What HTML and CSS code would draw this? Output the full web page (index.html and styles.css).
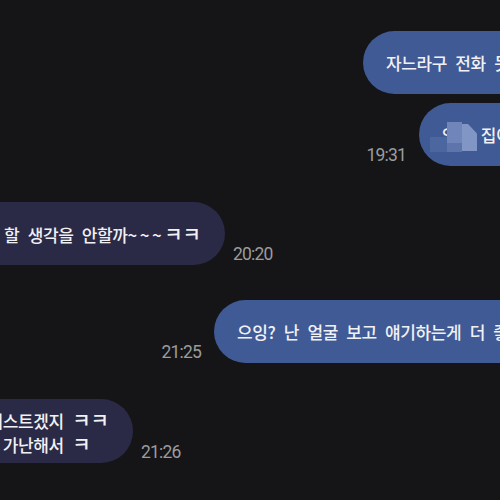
FILE: index.html
```html
<!DOCTYPE html>
<html lang="ko">
<head>
<meta charset="utf-8">
<title>대화</title>
<link rel="stylesheet" href="styles.css">
</head>
<body>
<div class="chat">
  <div class="row out first">
    <div class="bubble sent"><span class="txt">자느라구 전화 못 받았어 ㅠㅠ</span></div>
  </div>

  <div class="row out second">
    <span class="time">19:31</span>
    <div class="bubble sent masked">
      <span class="txt">엄마 집이라서 ㅎㅎ</span>
      <div class="mosaic" aria-hidden="true">
        <i class="m1"></i><i class="m2"></i><i class="m3"></i><i class="m4"></i>
      </div>
    </div>
  </div>

  <div class="row in third">
    <div class="bubble recv w225"><span class="txt">왜 전화 할 생각을 안할까<span class="tl">~~~</span><span class="k">ㅋㅋ</span></span></div>
    <span class="time">20:20</span>
  </div>

  <div class="row out fourth">
    <span class="time">21:25</span>
    <div class="bubble sent"><span class="txt">으잉? 난 얼굴 보고 얘기하는게 더 좋은데</span></div>
  </div>

  <div class="row in fifth">
    <div class="bubble recv two w133"><span class="txt">걍 블랙리스트겠지 <span class="k">ㅋㅋ</span><br>우리집이 가난해서 <span class="k">ㅋ</span></span></div>
    <span class="time">21:26</span>
  </div>
</div>
</body>
</html>
```

FILE: styles.css
```css
html, body {
  margin: 0;
  padding: 0;
  background: #151518;
}

.chat {
  width: 500px;
  height: 500px;
  overflow: hidden;
  padding-top: 31px;
  box-sizing: border-box;
  font-family: "Noto Sans CJK KR", "Noto Sans", sans-serif;
}

.row {
  display: flex;
  align-items: flex-end;
}

.second { margin-top: 9px; }
.third  { margin-top: 36px; }
.fourth { margin-top: 35px; }
.fifth  { margin-top: 36px; }

/* outgoing rows: time then bubble, bubble runs past the right edge */
.row.out.first  { padding-left: 363px; }
.row.out.second { padding-left: 346px; }
.row.out.fourth { padding-left: 141px; }

.row.out .time {
  width: 60px;
  text-align: right;
  margin-right: 13px;
}

.row.in .time {
  margin-left: 8px;
}

.bubble {
  position: relative;
  flex: none;
  height: 63px;
  box-sizing: border-box;
  padding: 20px 0;
  line-height: 23px;
  font-size: 17px;
  font-weight: 500;
  letter-spacing: -0.4px;
  word-spacing: 4px;
  color: #f1f1f4;
  white-space: nowrap;
  overflow: hidden;
}

.bubble .txt {
  display: inline-block;
}

.tl {
  letter-spacing: 2.5px;
}

/* laughing jamo are drawn a little larger than the syllables */
.k {
  font-size: 20px;
  letter-spacing: 0;
}

.bubble.sent {
  width: 420px;
  padding-left: 23px;
  background: #3f5a95;
  border-radius: 32px 0 0 32px;
}

.bubble.recv {
  display: flex;
  justify-content: flex-end;
  padding-right: 24px;
  background: #2a2a47;
  border-radius: 0 32px 32px 0;
}

.bubble.recv .txt {
  flex: none;
  text-align: left;
}

.bubble.two {
  height: 64px;
  padding-top: 9px;
  padding-bottom: 9px;
}

.w225 { width: 225px; }
.w133 { width: 133px; }

.time {
  flex: none;
  font-family: Roboto, "Noto Sans", sans-serif;
  font-size: 17.5px;
  letter-spacing: -0.8px;
  line-height: 18px;
  color: #9c9c9e;
  margin-bottom: 2px;
  white-space: nowrap;
}

/* pixelated cover over part of the second message */
.mosaic {
  position: absolute;
  left: 0;
  top: 0;
  width: 80px;
  height: 63px;
  filter: blur(0.6px);
}

.mosaic i {
  position: absolute;
  display: block;
}

.m1 { left: 11px; top: 34px; width: 17px; height: 15px; background: #4c669f; }
.m2 { left: 28px; top: 19px; width: 15px; height: 21px; background: #7086ba; }
.m3 { left: 28px; top: 40px; width: 15px; height: 9px;  background: #5d75ab; }
.m4 {
  left: 43px; top: 21px; width: 15px; height: 27px;
  background: #8196c5;
  clip-path: polygon(0 0, 40% 0, 100% 35%, 100% 100%, 0 100%);
}
```
